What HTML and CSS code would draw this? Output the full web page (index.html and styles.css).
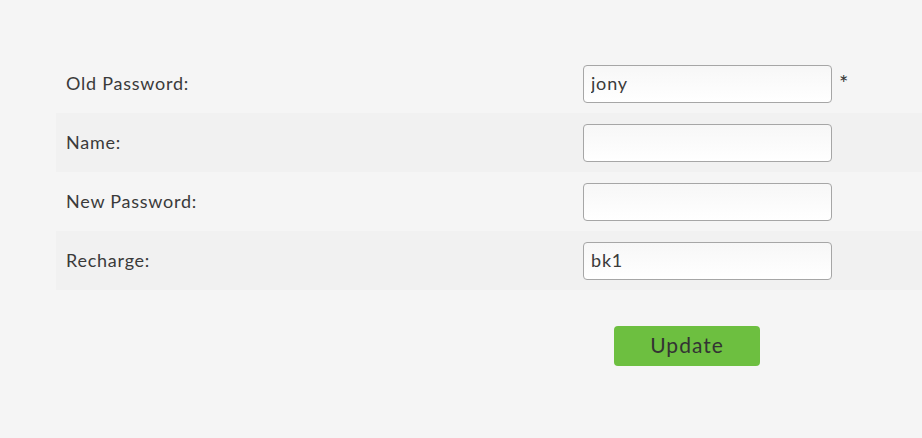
FILE: index.html
```html
<!DOCTYPE html>
<html>
<head>
<meta charset="utf-8">
<link rel="stylesheet" href="styles.css">
</head>
<body>
<div class="page">
  <form class="form">
    <div class="row">
      <div class="label">Old Password:</div>
      <div class="field"><input class="input" type="text" value="jony"><span class="req">*</span></div>
    </div>
    <div class="row alt">
      <div class="label">Name:</div>
      <div class="field"><input class="input" type="text" value=""></div>
    </div>
    <div class="row">
      <div class="label">New Password:</div>
      <div class="field"><input class="input" type="text" value=""></div>
    </div>
    <div class="row alt">
      <div class="label">Recharge:</div>
      <div class="field"><input class="input" type="text" value="bk1"></div>
    </div>
    <div class="actions">
      <button class="btn" type="button">Update</button>
    </div>
  </form>
</div>
</body>
</html>
```
FILE: styles.css
```css
html, body {
  margin: 0;
  padding: 0;
  background: #f5f5f5;
  font-family: Lato, "Open Sans", sans-serif;
  color: #333;
}
.page {
  padding: 54px 0 0 56px;
}
.form {
  display: flex;
  flex-direction: column;
}
.row {
  display: grid;
  grid-template-columns: 517px 1fr;
  height: 59px;
  align-items: center;
}
.row.alt {
  background: #f1f1f1;
}
.label {
  padding-left: 10px;
  padding-bottom: 2px;
  font-size: 18px;
  letter-spacing: 0.75px;
  color: #3a3a3a;
}
.field {
  display: flex;
  align-items: center;
  padding-left: 10px;
}
.input {
  box-sizing: border-box;
  width: 249px;
  height: 38px;
  border: 1px solid #a6a6a6;
  border-radius: 4px;
  background: linear-gradient(#f7f7f7, #ffffff);
  font-family: Lato, "Open Sans", sans-serif;
  font-size: 18px;
  letter-spacing: 0.8px;
  color: #3a3a3a;
  padding: 0 7px 2px;
  margin: 0;
  outline: none;
}
.req {
  margin-left: 7px;
  font-size: 22px;
  color: #333;
  align-self: flex-start;
  margin-top: 4px;
}
.actions {
  padding: 36px 0 0 558px;
}
.btn {
  width: 146px;
  height: 40px;
  border: none;
  border-radius: 4px;
  background: #6dbf40;
  color: #333;
  font-family: Lato, "Open Sans", sans-serif;
  font-size: 21px;
  letter-spacing: 1px;
  padding: 0 0 3px;
  margin: 0;
}
```
